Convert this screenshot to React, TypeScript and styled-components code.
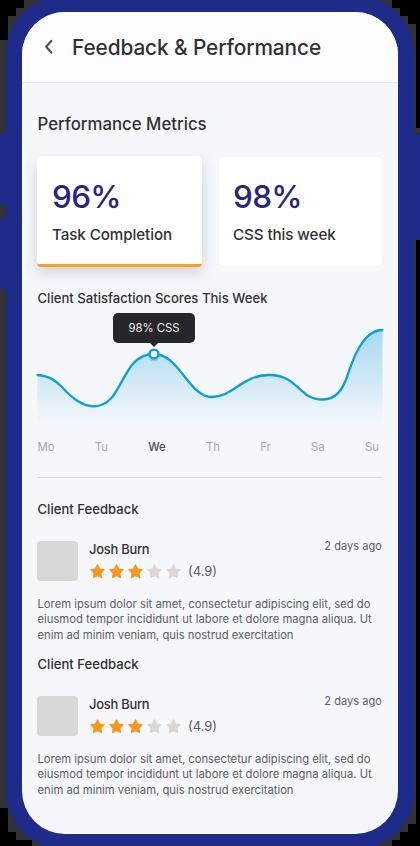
import React from 'react';
import styled, { createGlobalStyle, css } from 'styled-components';

const GlobalStyle = createGlobalStyle`
  html, body { margin: 0; padding: 0; background: #000; }
  * { box-sizing: border-box; }
  h1, h2, h3, p { margin: 0; font-weight: 500; }
`;

const Device = styled.div`
  position: relative;
  width: 420px;
  height: 846px;
  padding: 12px 22px;
  overflow: hidden;
  font-family: Inter, 'Liberation Sans', sans-serif;
  color: #303034;
`;

const Case = styled.svg`
  position: absolute;
  inset: 0;
`;

const Screen = styled.main`
  position: relative;
  width: 376px;
  height: 822px;
  border-radius: 43px;
  overflow: hidden;
  background: #f5f7fb;
`;

const Header = styled.header`
  display: flex;
  align-items: center;
  height: 71px;
  padding-left: 21px;
  background: #fdfdfe;
  border-bottom: 1px solid #e8e9ee;
`;

const BackButton = styled.button`
  display: flex;
  width: 12px;
  height: 18px;
  margin-right: 17px;
  padding: 0;
  border: 0;
  background: none;
`;

const Title = styled.h1`
  padding-top: 1px;
  font-size: 20.8px;
  line-height: 28px;
  letter-spacing: -0.09px;
  white-space: nowrap;
`;

const Content = styled.div`
  display: flex;
  flex-direction: column;
  padding: 28px 16px 0 15px;
`;

const SectionTitle = styled.h2`
  padding-left: 0.5px;
  font-size: 16.8px;
  line-height: 26px;
  letter-spacing: 0;
  white-space: nowrap;
`;

const Metrics = styled.div`
  display: flex;
  align-items: center;
  justify-content: space-between;
  margin-top: 19px;
`;

const MetricCard = styled.section<{ $active?: boolean }>`
  display: flex;
  flex-direction: column;
  width: 163px;
  height: 109px;
  padding: 20px 15px 0 14px;
  border-radius: 4px;
  background: #fff;
  box-shadow: 0 0 2px rgba(60, 60, 90, 0.06);
  ${(p) =>
    p.$active &&
    css`
      width: 165px;
      height: 111px;
      padding: 21px 15px 0;
      border-bottom: 3px solid #f0a02f;
      box-shadow: 0 6px 14px rgba(30, 35, 60, 0.17);
    `}
`;

const MetricValue = styled.strong`
  color: #28257f;
  font-size: 31.5px;
  font-weight: 500;
  line-height: 40px;
  letter-spacing: -0.7px;
`;

const MetricLabel = styled.span`
  margin-top: 7px;
  font-size: 15.2px;
  font-weight: 500;
  line-height: 22px;
  letter-spacing: -0.09px;
  white-space: nowrap;
`;

const SubTitle = styled.h3`
  padding-left: 0.5px;
  font-size: 13.1px;
  line-height: 18px;
  letter-spacing: 0.01px;
  white-space: nowrap;
`;

const ChartTitle = styled(SubTitle)`
  margin: 22px 0 1px;
`;

const ChartBox = styled.div`
  position: relative;
  height: 130px;
`;

const ChartDrawing = styled.svg`
  display: block;
  overflow: visible;
`;

const Tooltip = styled.div`
  position: absolute;
  top: 5px;
  left: 76px;
  width: 82px;
  height: 30px;
  border-radius: 5px;
  background: #26262b;
  color: #eeeef2;
  font-size: 11.3px;
  line-height: 30px;
  text-align: center;
  &::after {
    content: '';
    position: absolute;
    left: 36px;
    top: 29px;
    border: 5px solid transparent;
    border-top-color: #26262b;
    border-bottom: 0;
  }
`;

const Days = styled.div`
  display: flex;
  justify-content: space-between;
  padding: 0 3px 0 0.5px;
`;

const Day = styled.span<{ $active?: boolean }>`
  color: ${(p) => (p.$active ? '#4b4b53' : '#a6a7ae')};
  font-size: 11.4px;
  font-weight: ${(p) => (p.$active ? 500 : 400)};
  line-height: 18px;
`;

const Divider = styled.hr`
  width: 100%;
  height: 1px;
  margin: 21px 0 22px;
  border: 0;
  background: #d9dae0;
`;

const Feedback = styled.article`
  height: 155px;
`;

const Reviewer = styled.div`
  display: flex;
  margin-top: 23px;
  height: 41px;
`;

const Avatar = styled.div`
  width: 41px;
  height: 40px;
  border-radius: 4px;
  background: #d8d8d9;
`;

const ReviewerInfo = styled.div`
  flex: 1;
  padding-left: 11px;
`;

const Name = styled.div`
  margin-top: -0.5px;
  font-size: 12.9px;
  font-weight: 500;
  line-height: 18px;
  letter-spacing: -0.23px;
`;

const Rating = styled.div`
  display: flex;
  align-items: center;
  gap: 4.2px;
  height: 18px;
  margin-top: 3.5px;
  padding-left: 0.5px;
`;

const Score = styled.span`
  margin-left: 2.5px;
  color: #5b5a66;
  font-size: 13px;
  line-height: 18px;
`;

const Time = styled.time`
  margin-top: -3px;
  color: #5c5c64;
  font-size: 11.1px;
  line-height: 16px;
`;

const Comment = styled.p`
  margin-top: 15px;
  padding-left: 0.5px;
  color: #5c5c64;
  font-size: 11.25px;
  font-weight: 400;
  line-height: 15.4px;
  white-space: pre;
`;

const days = ['Mo', 'Tu', 'We', 'Th', 'Fr', 'Sa', 'Su'];
const curve =
  'M0.5 67 C13 68 19 73 25 79 C32 87 44 98.3 57 98.3 C87 98.3 83 46 117 46 C142 46 152 89 175 89 C196 89 205 67 232 67 C262 67 261 91.5 285.5 91.5 C300 91.5 306 80 310 69 C315 54 325 22 345.5 22';
const comment =
  'Lorem ipsum dolor sit amet, consectetur adipiscing elit, sed do\neiusmod tempor incididunt ut labore et dolore magna aliqua. Ut\nenim ad minim veniam, quis nostrud exercitation';

const Star = ({ filled }: { filled: boolean }) => (
  <svg width="15" height="15" viewBox="0 0 14 14">
    <path
      d="M7 1 L8.9 4.8 L13 5.4 L10 8.3 L10.7 12.6 L7 10.6 L3.3 12.6 L4 8.3 L1 5.4 L5.1 4.8 Z"
      fill={filled ? '#f6971b' : '#dad6d1'}
      stroke={filled ? '#f6971b' : '#dad6d1'}
      strokeWidth="1.3"
      strokeLinejoin="round"
    />
  </svg>
);

const ClientFeedback = () => (
  <Feedback>
    <SubTitle>Client Feedback</SubTitle>
    <Reviewer>
      <Avatar />
      <ReviewerInfo>
        <Name>Josh Burn</Name>
        <Rating>
          {[0, 1, 2, 3, 4].map((i) => (
            <Star key={i} filled={i < 3} />
          ))}
          <Score>(4.9)</Score>
        </Rating>
      </ReviewerInfo>
      <Time>2 days ago</Time>
    </Reviewer>
    <Comment>{comment}</Comment>
  </Feedback>
);

export default function App() {
  return (
    <>
      <GlobalStyle />
      <Device>
        <Case width="420" height="846" viewBox="0 0 420 846">
          <path fill="#333" shapeRendering="crispEdges" d="M0 40H8V16H16V8H24V0H392V8H400V16H408V24H416V824H408V832H400V840H392V846H32V840H16V832H8V808H0Z" />
          <rect x="6" y="-4" width="408" height="853" rx="57" fill="#1e2b88" />
          <path fill="#1e2b88" d="M6 132Q3 133 0 134V203Q6 204 6 209V213Q6 218 0 220V287Q3 289 6 291ZM414 132L420 134V240H414Z" />
          <path fill="#333" d="M414 128H420V134L414 132Z" />
        </Case>
        <Screen>
          <Header>
            <BackButton aria-label="Back">
              <svg width="12" height="18" viewBox="0 0 12 18">
                <path d="M8.3 3 L3.2 8.8 L8.3 14.6" fill="none" stroke="#505055" strokeWidth="2.2" strokeLinecap="round" strokeLinejoin="round" />
              </svg>
            </BackButton>
            <Title>Feedback &amp; Performance</Title>
          </Header>
          <Content>
            <SectionTitle>Performance Metrics</SectionTitle>
            <Metrics>
              <MetricCard $active>
                <MetricValue>96%</MetricValue>
                <MetricLabel>Task Completion</MetricLabel>
              </MetricCard>
              <MetricCard>
                <MetricValue>98%</MetricValue>
                <MetricLabel>CSS this week</MetricLabel>
              </MetricCard>
            </Metrics>
            <ChartTitle>Client Satisfaction Scores This Week</ChartTitle>
            <ChartBox>
              <ChartDrawing width="345" height="130" viewBox="0 0 345 130">
                <defs>
                  <linearGradient id="area" x1="0" y1="22" x2="0" y2="116" gradientUnits="userSpaceOnUse">
                    <stop offset="0" stopColor="#16a5dc" stopOpacity="0.36" />
                    <stop offset="1" stopColor="#16a5dc" stopOpacity="0" />
                  </linearGradient>
                </defs>
                <path d={`${curve} V118 H0.5 Z`} fill="url(#area)" />
                <path d={curve} fill="none" stroke="#0b9fd8" strokeWidth="2.3" strokeLinecap="round" />
                <circle cx="117" cy="48" r="5.5" fill="#33505e" opacity="0.2" />
                <circle cx="117" cy="46" r="4.4" fill="#fff" stroke="#0b9fd8" strokeWidth="2.4" />
              </ChartDrawing>
              <Tooltip>98% CSS</Tooltip>
            </ChartBox>
            <Days>
              {days.map((day) => (
                <Day key={day} $active={day === 'We'}>{day}</Day>
              ))}
            </Days>
            <Divider />
            <ClientFeedback />
            <ClientFeedback />
          </Content>
        </Screen>
      </Device>
    </>
  );
}
